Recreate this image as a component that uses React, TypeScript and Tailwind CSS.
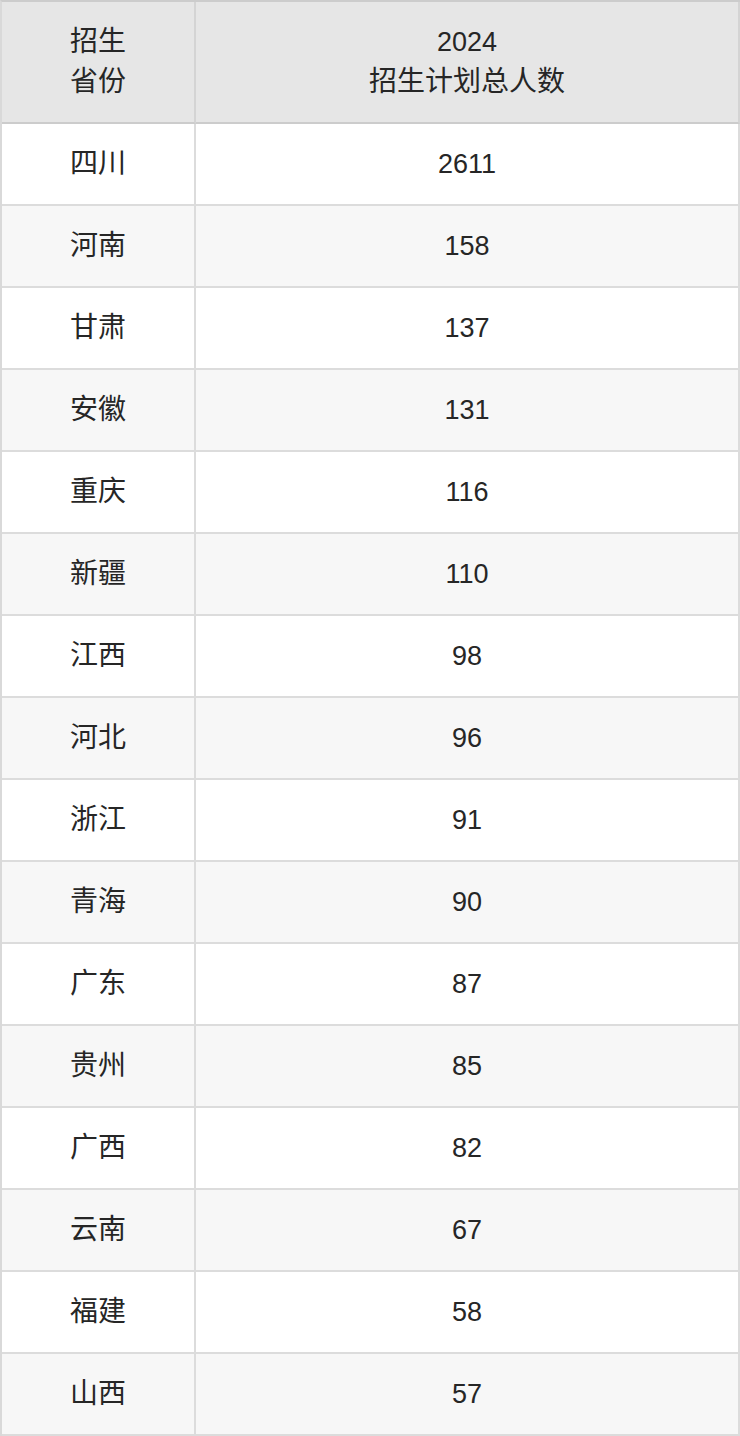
import React from "react";

const rows: [string, string][] = [
 ["四川", "2611"],
 ["河南", "158"],
 ["甘肃", "137"],
 ["安徽", "131"],
 ["重庆", "116"],
 ["新疆", "110"],
 ["江西", "98"],
 ["河北", "96"],
 ["浙江", "91"],
 ["青海", "90"],
 ["广东", "87"],
 ["贵州", "85"],
 ["广西", "82"],
 ["云南", "67"],
 ["福建", "58"],
 ["山西", "57"],
];

export default function App() {
 return (
  <div
   className="w-[740px] bg-white text-[27px] text-[#262626]"
   style={{ fontFamily: '"Liberation Sans", "Noto Sans CJK SC", sans-serif' }}
  >
   <div className="grid grid-cols-[194px_1fr] border-t-2 border-l-2 border-t-[#cccccc] border-l-[#d9d9d9]">
    <div className="flex h-[122px] items-center justify-center border-r-2 border-b-2 border-r-[#d4d4d4] border-b-[#cccccc] bg-[#e6e6e6] text-center text-[28px] leading-[40px]">
     <div>
      招生
      <br />
      省份
     </div>
    </div>
    <div className="flex h-[122px] items-center justify-center border-r-2 border-b-2 border-r-[#d4d4d4] border-b-[#cccccc] bg-[#e6e6e6] text-center leading-[40px]">
     <div>
      <div>2024</div>
      <div className="text-[28px]">招生计划总人数</div>
     </div>
    </div>
    {rows.map(([province, count], i) => {
     const bg = i % 2 === 0 ? "bg-white" : "bg-[#f7f7f7]";
     return (
      <React.Fragment key={province}>
       <div className={`flex h-[82px] items-center justify-center border-r-2 border-b-2 border-[#dcdcdc] text-[28px] ${bg}`}>{province}</div>
       <div className={`flex h-[82px] items-center justify-center border-r-2 border-b-2 border-[#dcdcdc] ${bg}`}>{count}</div>
      </React.Fragment>
     );
    })}
   </div>
  </div>
 );
}
